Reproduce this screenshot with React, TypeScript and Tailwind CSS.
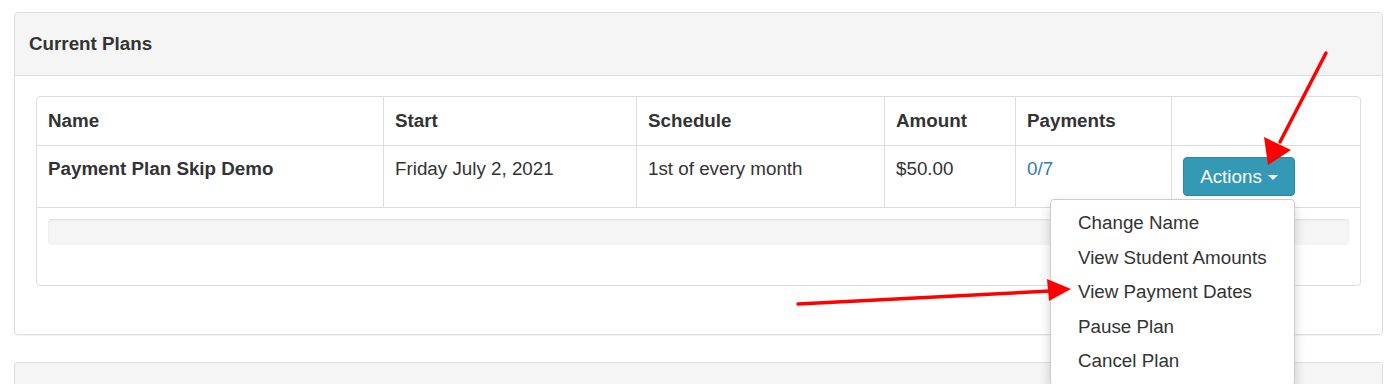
import React from 'react'

const font = { fontFamily: '"Liberation Sans", Arial, sans-serif' }

const columns = [
  { label: 'Name', w: 'w-[346px]' },
  { label: 'Start', w: 'w-[253px]' },
  { label: 'Schedule', w: 'w-[248px]' },
  { label: 'Amount', w: 'w-[131px]' },
  { label: 'Payments', w: 'w-[156px]' },
  { label: '', w: 'flex-1' },
]

const menuItems = ['Change Name', 'View Student Amounts', 'View Payment Dates', 'Pause Plan', 'Cancel Plan']

function ActionsMenu() {
  return (
    <div className="relative">
      <button className="flex h-[39px] w-[112px] items-center justify-center gap-[6px] rounded-[4px] border border-[#2a8aa4] bg-[#3399b5] text-[18.8px] text-white">
        Actions
        <span className="mt-[2px] h-0 w-0 border-x-[5px] border-t-[5px] border-x-transparent border-t-white" />
      </button>
      <div className="absolute left-[-133px] top-[42px] z-10 w-[245px] rounded-[4px] border border-[#ccc] bg-white py-[6px] shadow-[0_6px_12px_rgba(0,0,0,0.175)]">
        {menuItems.map((item) => (
          <div key={item} className="h-[34.5px] px-[27px] pt-[7px] text-[18.8px] leading-[20px] text-[#333]">
            {item}
          </div>
        ))}
      </div>
    </div>
  )
}

export default function App() {
  return (
    <div className="relative h-[384px] w-full overflow-hidden bg-white pt-[12px] text-[#333]" style={font}>
      <div className="mx-[14px] mr-[15px] rounded-[4px] border border-[#ddd] shadow-[0_1px_1px_rgba(0,0,0,0.05)]">
        <div className="flex h-[63px] items-center rounded-t-[4px] border-b border-[#ddd] bg-[#f5f5f5] px-[14px] text-[18.8px] font-bold">
          Current Plans
        </div>
        <div className="px-[21px] pb-[48px] pt-[20px]">
          <div className="rounded-[4px] border border-[#ddd]">
            <div className="flex h-[49px] border-b border-[#ddd]">
              {columns.map((c, i) => (
                <div
                  key={i}
                  className={`${c.w} flex items-center px-[11px] text-[18.8px] font-bold ${i > 0 ? 'border-l border-[#ddd]' : ''}`}
                >
                  {c.label}
                </div>
              ))}
            </div>
            <div className="flex h-[62px] border-b border-[#ddd] text-[18.8px] leading-[22px]">
              <div className="w-[346px] px-[11px] pt-[12px] font-bold">Payment Plan Skip Demo</div>
              <div className="w-[253px] border-l border-[#ddd] px-[11px] pt-[12px]">Friday July 2, 2021</div>
              <div className="w-[248px] border-l border-[#ddd] px-[11px] pt-[12px]">1st of every month</div>
              <div className="w-[131px] border-l border-[#ddd] px-[11px] pt-[12px]">$50.00</div>
              <div className="w-[156px] border-l border-[#ddd] px-[11px] pt-[12px] text-[#337ab7]">0/7</div>
              <div className="flex-1 border-l border-[#ddd] px-[11px] pt-[11px]">
                <ActionsMenu />
              </div>
            </div>
            <div className="h-[77px] px-[11px] pt-[11px]">
              <div className="h-[26px] rounded-[4px] bg-[#f5f5f5] shadow-[inset_0_1px_2px_rgba(0,0,0,0.1)]" />
            </div>
          </div>
        </div>
      </div>

      <div className="mx-[14px] mr-[15px] mt-[27px] h-[40px] rounded-t-[4px] border border-[#ddd] bg-[#f5f5f5]" />

      <svg className="pointer-events-none absolute left-0 top-0 z-20" width="1398" height="384">
        <line x1="1326" y1="53" x2="1280" y2="142" stroke="#f00" strokeWidth="3.5" strokeLinecap="round" />
        <polygon points="1268,165 1264,137 1291,150" fill="#f00" />
        <line x1="798" y1="304" x2="1050" y2="291" stroke="#f00" strokeWidth="3.5" strokeLinecap="round" />
        <polygon points="1071,289 1047,279 1049,301" fill="#f00" />
      </svg>
    </div>
  )
}
